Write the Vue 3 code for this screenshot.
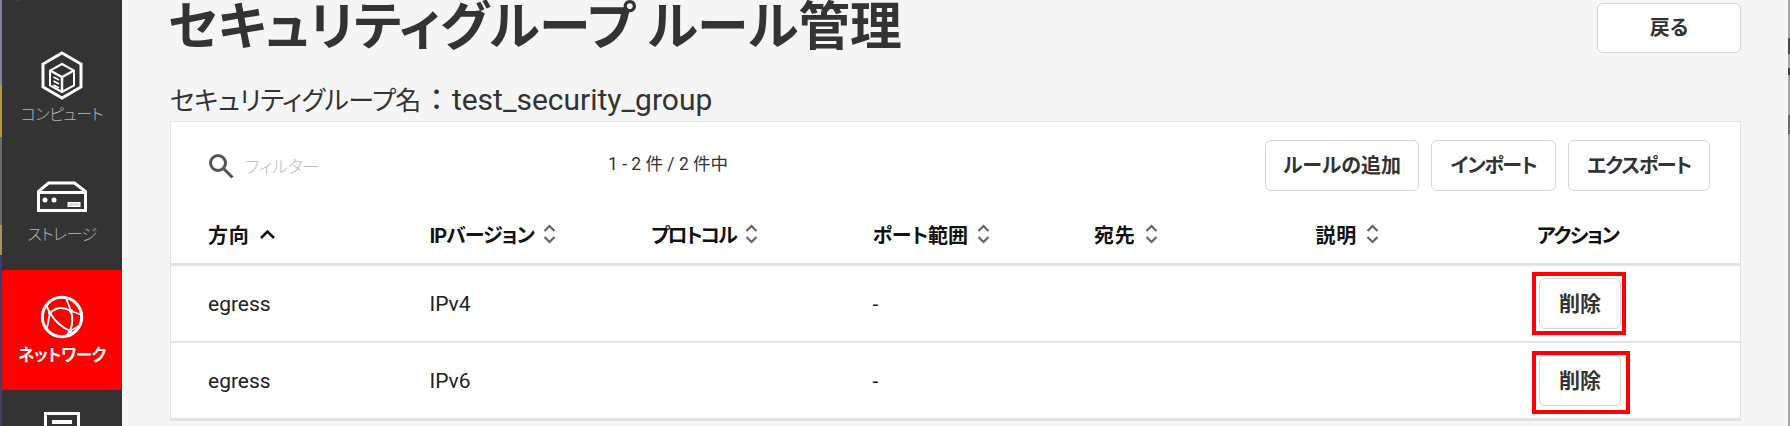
<script setup>
const cols = [
  { label: 'IPバージョン', ls: 'ls-ip' },
  { label: 'プロトコル', ls: 'ls-proto' },
  { label: 'ポート範囲', ls: '' },
  { label: '宛先', ls: 'ls-kanji' },
  { label: '説明', ls: 'ls-kanji' },
]
const rows = [
  { dir: 'egress', ip: 'IPv4', port: '-', mark: 'mark-a' },
  { dir: 'egress', ip: 'IPv6', port: '-', mark: 'mark-b' },
]
</script>

<template>
  <div class="page">
    <div class="strip"></div>
    <aside class="side">
      <div class="clipped">ダッシュボード</div>
      <div class="nav nav-compute">
        <svg width="42" height="50" viewBox="0 0 42 50" fill="none" stroke="#fff">
          <path d="M21 2 L40 13 V36 L21 47 L2 36 V13 Z" stroke-width="3"/>
          <path d="M21 13 L33 19.5 V34.5 L21 41 L9 34.5 V19.5 Z" stroke-width="2"/>
          <path d="M9 19.5 L21 26 L33 19.5 M21 26 V41" stroke-width="2.5"/>
          <path d="M12.5 26 L18 29 M12.5 30 L18 33 M12.5 34 L18 37" stroke-width="1.5"/>
        </svg>
        <span>コンピュート</span>
      </div>
      <div class="nav nav-storage">
        <svg width="50" height="31" viewBox="0 0 50 31" fill="none" stroke="#fff">
          <path d="M1.5 29.5 V10.5 L11.5 2 H37.5 L48.5 10.5 V29.5 Z M1.5 11.5 H48.5" stroke-width="3"/>
          <circle cx="8" cy="19" r="2.5" fill="#fff" stroke="none"/>
          <circle cx="17" cy="19" r="2.5" fill="#fff" stroke="none"/>
          <rect x="31" y="21.5" width="12" height="4" fill="#ddd" stroke="#fff" stroke-width="1"/>
        </svg>
        <span>ストレージ</span>
      </div>
      <div class="nav active">
        <svg width="44" height="44" viewBox="0 0 44 44" fill="none" stroke="#fff">
          <circle cx="22" cy="22" r="19.7" stroke-width="3"/>
          <path d="M10 18 Q19 9 31 16 M31 16 Q34 26 30 36 M10 18 Q17 30 30 36" stroke-width="2"/>
          <path d="M10 18 L6 10 M10 18 L7 33 M31 16 L26 3 M31 16 L42 20 M30 36 L25 42 M30 36 L39 31" stroke-width="1.8"/>
          <circle cx="10" cy="18" r="2" fill="#fff" stroke="none"/>
          <circle cx="31" cy="16" r="2" fill="#fff" stroke="none"/>
          <circle cx="30" cy="36" r="2.2" fill="#fff" stroke="none"/>
        </svg>
        <span>ネットワーク</span>
      </div>
      <div class="nav-last">
        <svg width="36" height="14" viewBox="0 0 36 14" fill="none" stroke="#fff">
          <path d="M1.5 14 V1.5 H34.5 V14" stroke-width="3"/>
          <path d="M8 10 H28" stroke-width="4"/>
        </svg>
      </div>
    </aside>

    <main class="main">
      <header class="head">
        <h1>セキュリティグループ ルール管理</h1>
        <button class="btn btn-back">戻る</button>
      </header>
      <h2><span class="h2-ja">セキュリティグループ名</span><span class="h2-colon">：</span>test_security_group</h2>

      <section class="card">
        <div class="tools">
          <div class="filter">
            <svg width="26" height="26" viewBox="0 0 26 26" fill="none" stroke="#555" stroke-width="3">
              <circle cx="10" cy="10" r="7.5"/>
              <path d="M15.5 15.5 L24.5 24.5"/>
            </svg>
            <span>フィルター</span>
          </div>
          <div class="count">1 - 2 件 / 2 件中</div>
          <div class="actions">
            <button class="btn">ルールの追加</button>
            <button class="btn btn-tight">インポート</button>
            <button class="btn btn-tight">エクスポート</button>
          </div>
        </div>

        <div class="row row-head">
          <div class="cell ls-kanji">方向
            <svg width="17" height="11" viewBox="0 0 17 11" fill="none" stroke="#111" stroke-width="2.6">
              <path d="M2 9 L8.5 2.5 L15 9"/>
            </svg>
          </div>
          <div v-for="c in cols" :key="c.label" class="cell">
            <span :class="c.ls">{{ c.label }}</span>
            <svg width="13" height="22" viewBox="0 0 13 22" fill="none" stroke="#666" stroke-width="2.2">
              <path d="M1.5 8 L6.5 3 L11.5 8 M1.5 14 L6.5 19 L11.5 14"/>
            </svg>
          </div>
          <div class="cell ls-action">アクション</div>
        </div>

        <div v-for="r in rows" :key="r.ip" class="row row-body">
          <div class="cell">{{ r.dir }}</div>
          <div class="cell">{{ r.ip }}</div>
          <div class="cell"></div>
          <div class="cell">{{ r.port }}</div>
          <div class="cell"></div>
          <div class="cell"></div>
          <div class="cell">
            <div class="del-wrap">
              <button class="btn btn-del">削除</button>
              <span class="mark" :class="r.mark"></span>
            </div>
          </div>
        </div>
      </section>
    </main>
    <div class="edge"></div>
  </div>
</template>

<style>
html, body { margin: 0; background: #f5f5f5; overflow: hidden; }
</style>

<style scoped>
.page {
  display: flex;
  width: 1790px;
  height: 426px;
  overflow: hidden;
  background: #f5f5f5;
  font-family: Roboto, "Noto Sans CJK JP", sans-serif;
  font-feature-settings: "palt";
  color: #333;
}
.strip {
  width: 2px;
  flex: none;
  background: linear-gradient(to bottom,
    #80859a 0 85px, #b8963e 85px 137px, #6a6a70 137px 225px,
    #a89060 225px 255px, #3a3a80 255px 285px, #40405f 285px 426px);
}
.edge {
  width: 2px;
  flex: none;
  background: linear-gradient(to bottom,
    #a8a8a8 0 38px, #4a4a4a 38px 54px, #a8a8a8 54px 68px, #4a4a4a 68px 75px,
    #a8a8a8 75px 115px, #6a6a70 115px 134px, #a8a8a8 134px 426px);
}
.side {
  width: 120px;
  flex: none;
  background: #333;
  color: #b4b4b4;
  display: flex;
  flex-direction: column;
  font-size: 16px;
  letter-spacing: -0.6px;
  font-weight: 300;
  overflow: hidden;
}
.clipped {
  flex: none;
  height: 2px;
  line-height: 2px;
  margin-top: -7px;
  margin-bottom: 7px;
  text-align: center;
  white-space: nowrap;
}
.nav { display: flex; flex-direction: column; align-items: center; flex: none; box-sizing: border-box; }
.nav span { line-height: 24px; white-space: nowrap; }
.nav-compute { height: 128px; padding-top: 49px; gap: 2px; }
.nav-storage { height: 140px; padding-top: 51px; gap: 11px; }
.active {
  height: 120px;
  background: #f00;
  color: #fff;
  font-weight: 700;
  padding-top: 25px;
  gap: 5px;
  font-size: 16.5px;
  letter-spacing: -0.4px;
}
.nav-last { display: flex; justify-content: center; padding-top: 22px; }
.main {
  width: 1666px;
  padding-left: 48px;
  box-sizing: border-box;
  display: flex;
  flex-direction: column;
  flex: none;
}
.head { display: flex; justify-content: space-between; height: 56px; width: 1571px; flex: none; }
h1 { margin: 0 0 0 -2px; font-size: 51.75px; line-height: 56px; font-weight: 700; color: #333; white-space: nowrap; }
h2 {
  margin: 23px 0 0;
  font-size: 30px;
  line-height: 42px;
  height: 42px;
  font-weight: 400;
  color: #333;
  white-space: nowrap;
  flex: none;
  display: flex;
  align-items: baseline;
}
.h2-ja { font-size: 26px; letter-spacing: -0.5px; }
.h2-colon { font-feature-settings: normal; width: 31px; text-align: center; }
.btn {
  font-family: inherit;
  font-feature-settings: "palt";
  background: #fff;
  border: 1px solid #d4d4d4;
  border-radius: 6px;
  font-size: 20px;
  font-weight: 700;
  color: #333;
  height: 51px;
  padding: 0 0 3px;
  box-sizing: border-box;
  flex: none;
}
.btn-tight { letter-spacing: -1.2px; }
.btn-back { width: 144px; height: 50px; margin-top: 3px; }
.card {
  width: 1571px;
  height: 300px;
  background: #fff;
  border: 1px solid #e3e3e3;
  box-sizing: border-box;
  display: flex;
  flex-direction: column;
  flex: none;
}
.tools { display: flex; height: 83px; padding: 18px 30px 0 37px; box-sizing: border-box; flex: none; }
.filter { display: flex; align-items: center; gap: 11px; width: 400px; height: 51px; color: #bbb; font-size: 17px; font-weight: 300; }
.count { font-size: 17.5px; color: #333; line-height: 48px; white-space: nowrap; }
.actions { margin-left: auto; display: flex; gap: 12px; }
.actions .btn:nth-child(1) { width: 154px; }
.actions .btn:nth-child(2) { width: 125px; }
.actions .btn:nth-child(3) { width: 142px; }
.row {
  display: grid;
  grid-template-columns: repeat(6, 221.5px) 1fr;
  padding-left: 37px;
  align-items: center;
  flex: none;
}
.row-head { height: 61px; font-weight: 700; font-size: 20px; color: #111; border-bottom: 3px solid #e3e3e3; box-sizing: border-box; }
.row-body { height: 77px; font-size: 21px; color: #222; border-bottom: 2px solid #e3e3e3; box-sizing: border-box; }
.cell { display: flex; align-items: center; gap: 9px; white-space: nowrap; }
.ls-ip { letter-spacing: -1px; }
.ls-proto { letter-spacing: -2px; }
.ls-kanji { letter-spacing: 0.8px; }
.ls-action { letter-spacing: -1.4px; }
.del-wrap { position: relative; margin-left: 2px; display: flex; }
.btn-del { width: 82px; font-size: 21px; }
.mark { position: absolute; border: 4px solid #f00; box-sizing: border-box; pointer-events: none; }
.mark-a { left: -7px; top: -6px; width: 94px; height: 63px; }
.mark-b { left: -7px; top: -4px; width: 98px; height: 63px; }
</style>
